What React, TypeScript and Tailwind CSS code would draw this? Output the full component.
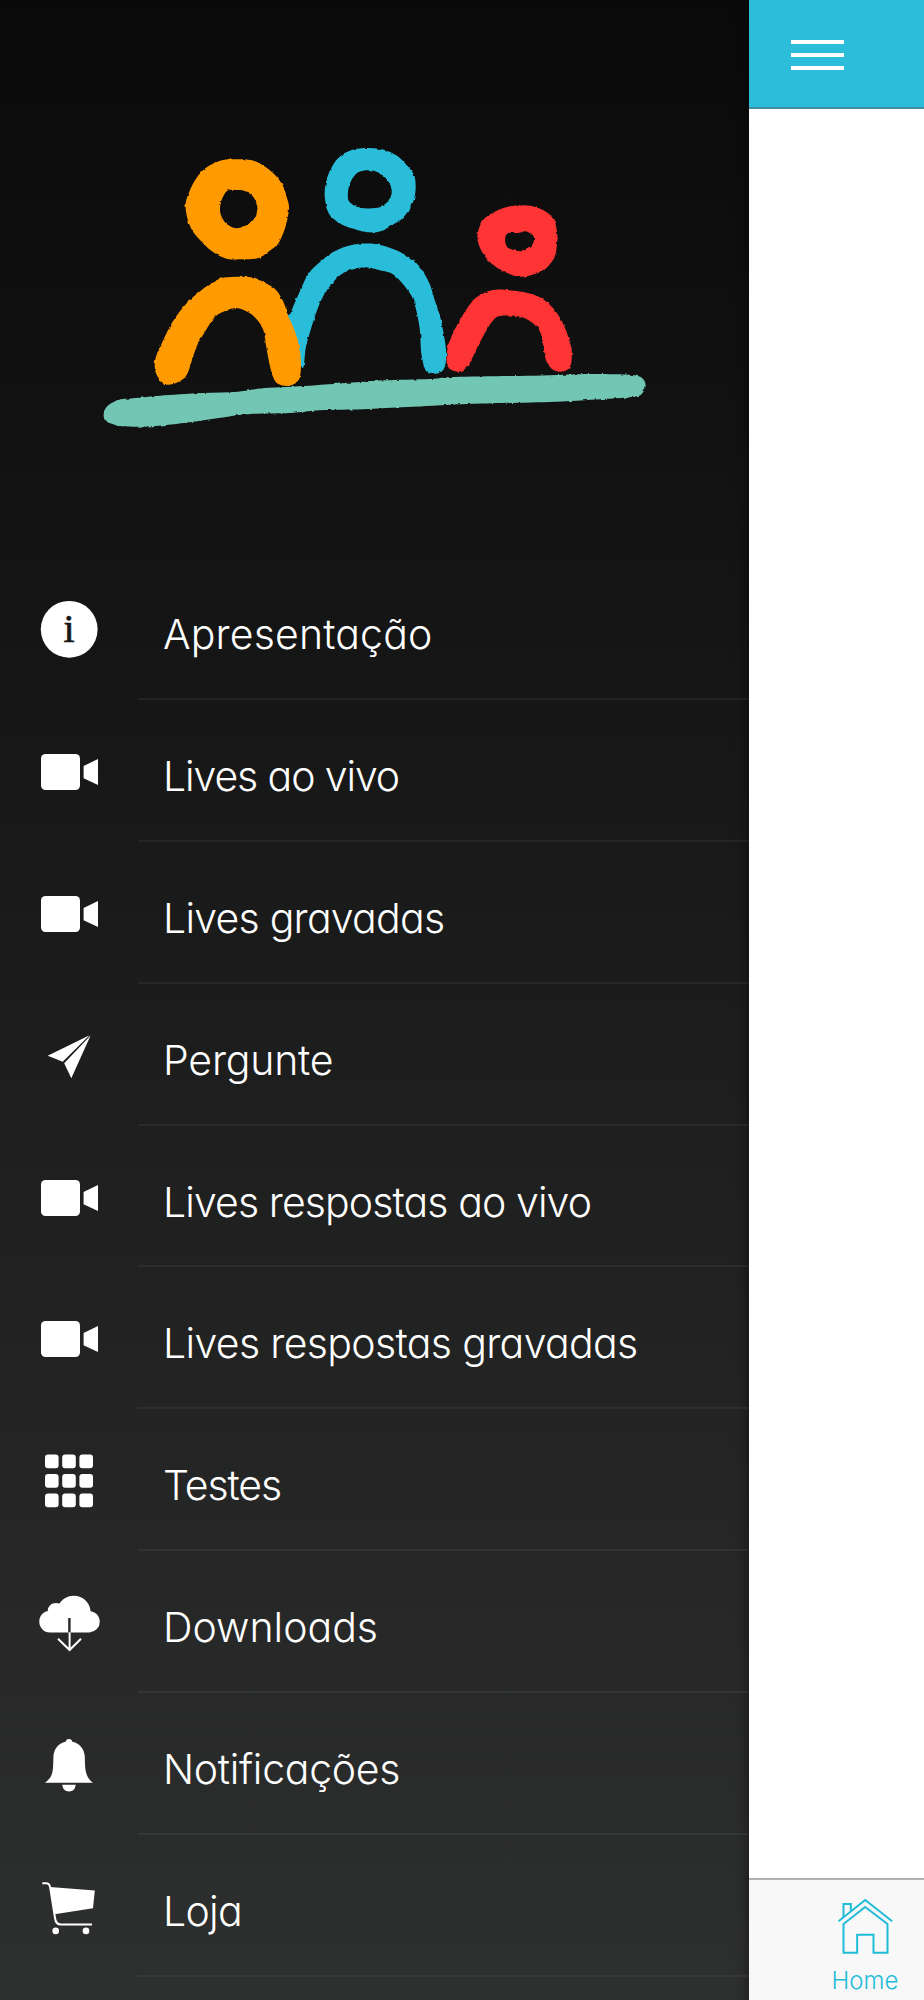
import React from "react";

// closed smooth curve through a list of "x y x y ..." points
function smooth(points: string) {
    const n = points.trim().split(/\s+/).map(Number);
    const count = n.length / 2;
    const at = (i: number) => {
        const k = ((i + count) % count) * 2;
        return [n[k], n[k + 1]];
    };
    let d = `M${n[0]} ${n[1]}`;
    for (let i = 0; i < count; i++) {
        const [a, b, c, e] = [at(i - 1), at(i), at(i + 1), at(i + 2)];
        d += ` C${b[0] + (c[0] - a[0]) / 6} ${b[1] + (c[1] - a[1]) / 6} ${c[0] - (e[0] - b[0]) / 6} ${c[1] - (e[1] - b[1]) / 6} ${c[0]} ${c[1]}`;
    }
    return d + "Z";
}

function Logo() {
    return (
        <svg viewBox="0 0 1680 930" className="h-[310px] w-[560px]">
            <filter id="rough" x="0" y="0" width="1680" height="930" filterUnits="userSpaceOnUse">
                <feTurbulence type="fractalNoise" baseFrequency="0.06" numOctaves="2" seed="4" />
                <feDisplacementMap in="SourceGraphic" scale="8" xChannelSelector="R" yChannelSelector="G" />
            </filter>
            <g filter="url(#rough)" fillRule="evenodd">
                {/* middle person */}
                <g fill="#2bbdd9">
                    <path
                        d={
                            smooth("785 60 835 54 882 59 908 70 932 86 956 112 972 136 977 170 972 208 958 238 936 266 908 284 872 304 835 307 800 299 765 288 735 270 714 245 704 195 709 153 722 118 745 84") +
                            smooth("838 121 860 125 884 141 901 165 905 190 896 213 882 227 855 234 820 235 797 229 776 212 774 185 782 155 800 130 820 122")
                        }
                    />
                    <path d={smooth("598 575 604 545 627 490 655 432 690 396 735 363 790 344 855 342 915 359 962 385 992 415 1018 460 1034 510 1049 555 1059 600 1068 660 1066 704 1052 727 1022 731 1005 717 994 670 989 595 976 530 958 487 912 435 870 421 835 413 795 416 752 434 715 475 690 518 668 580 648 650 636 712")} />
                </g>
                {/* left person */}
                <g fill="#ff9a02">
                    <path
                        d={
                            smooth("398 90 440 88 486 91 522 108 556 136 580 170 592 208 597 235 588 285 568 335 545 358 505 384 458 388 410 386 366 364 330 330 306 300 291 260 287 220 298 185 318 146 350 112") +
                            smooth("412 182 438 180 462 182 484 194 498 215 502 240 492 267 470 285 438 295 410 282 394 258 390 235 396 207")
                        }
                    />
                    <path d={smooth("410 442 450 440 492 443 528 460 558 480 580 515 594 556 614 602 627 648 633 700 627 748 600 767 565 762 548 738 536 690 528 645 520 600 500 568 475 547 440 534 408 542 375 560 348 600 322 645 306 690 290 735 263 757 230 764 207 746 195 718 198 680 220 630 248 575 290 520 335 480 375 453")} />
                </g>
                {/* right person */}
                <g fill="#ff3535">
                    <path
                        d={
                            smooth("1260 229 1295 226 1328 229 1368 245 1392 270 1401 305 1402 330 1396 374 1380 402 1352 426 1295 440 1250 428 1210 405 1182 375 1167 345 1162 318 1170 287 1185 264 1225 240") +
                            smooth("1255 309 1285 309 1306 304 1328 315 1332 330 1325 347 1310 358 1294 364 1260 357 1248 344 1246 322")
                        }
                    />
                    <path d={smooth("1205 481 1250 480 1310 488 1350 502 1385 530 1408 560 1430 605 1436 630 1445 658 1443 704 1430 720 1410 725 1385 716 1368 690 1358 635 1350 605 1327 578 1290 560 1230 558 1208 573 1190 600 1168 640 1150 678 1132 710 1105 725 1075 712 1070 672 1084 620 1113 565 1140 523 1162 500")} />
                </g>
                {/* ground */}
                <path
                    fill="#72c6b4"
                    d={smooth("78 812 98 807 150 803 210 797 335 789 445 785 525 774 660 767 800 757 880 751 1020 747 1095 741 1330 737 1500 732 1580 733 1640 737 1660 748 1667 768 1658 788 1636 800 1555 806 1395 815 1205 820 1085 824 935 832 820 838 690 841 600 849 480 852 380 865 300 877 185 889 98 889 65 881 47 874 41 855 50 830")}
                />
            </g>
        </svg>
    );
}

function Icon({ children }: { children: React.ReactNode }) {
    return (
        <svg viewBox="0 0 60 60" className="h-[60px] w-[60px] shrink-0 overflow-visible fill-white">
            {children}
        </svg>
    );
}

const info = (
    <Icon>
        <circle cx="30.2" cy="29.3" r="28.4" />
        <text
            x="30"
            y="42"
            textAnchor="middle"
            fontSize="40"
            className="fill-[#171717] stroke-[#171717] stroke-[0.7] font-['Liberation_Serif',serif]"
        >
            i
        </text>
    </Icon>
);

const camera = (
    <Icon>
        <rect x="2" y="12" width="39" height="36" rx="4.5" />
        <path d="M44.6 24 L59 17 V43 L44.6 36.3 Z" />
    </Icon>
);

const plane = (
    <Icon>
        <path d="M50.5 9.3 L8.7 29.8 L23.7 35.8 Z" />
        <path d="M51.6 9.6 L25.2 37.2 L32.3 52.3 Z" />
    </Icon>
);

const grid = (
    <Icon>
        {[3.6, 23.1, 42.6].map((y) =>
            [6, 23.2, 40.4].map((x) => <rect key={`${x}-${y}`} x={x} y={y} width="13.6" height="13.6" rx="3" />)
        )}
    </Icon>
);

const cloud = (
    <Icon>
        <path d="M10.8 39.4 A10.6 10.6 0 0 1 .3 28.6 C.3 23 4 19 8.8 18 C8.8 12.5 14 8.6 20.4 10.6 C23.5 5.8 28.5 2.7 34.8 2.7 C44 2.7 50.8 9.4 51.6 18.2 C57 19 60.8 23.3 60.8 28.6 A10.6 10.6 0 0 1 50.5 39.4 Z" />
        <path d="M30.4 25 V39.4" className="fill-none stroke-[#262827] stroke-[2.4]" />
        <path d="M30.6 39.4 V57.4 M19 45.7 L30.6 57 L42 45.7" className="fill-none stroke-white stroke-[2]" />
    </Icon>
);

const bell = (
    <Icon>
        <path d="M30 4 C32 4 33 5.2 33.4 6.8 C41 8.6 45.6 14.5 45.8 22 C46 30 46 33.5 47.2 38 C48.5 42.5 50.5 45 54 47.8 H6 C9.5 45 12 42.5 13.2 38 C14.3 33.5 14.2 30 14.4 22 C14.6 14.5 19 8.6 26.6 6.8 C27 5.2 28 4 30 4 Z" />
        <path d="M23.3 49.8 H36.7 C36.3 54 34 56.5 30 56.5 C26 56.5 23.7 54 23.3 49.8 Z" />
    </Icon>
);

const cart = (
    <Icon>
        <path d="M11 9.9 L55.8 13.6 L54 31.2 L15.6 37.2 Z" />
        <path
            d="M3.3 6.2 H7 C9.5 6.2 10.8 8 11.2 10.5 L16 41 C16.6 45.5 18.5 47.6 22 47.6 H53"
            className="fill-none stroke-white stroke-2"
        />
        <circle cx="16.7" cy="53.9" r="3.3" />
        <circle cx="47" cy="53.9" r="3.3" />
    </Icon>
);

const items = [
    { label: "Apresentação", icon: info, tracking: "tracking-[0.15px]" },
    { label: "Lives ao vivo", icon: camera, tracking: "tracking-[-1.1px]" },
    { label: "Lives gravadas", icon: camera, tracking: "tracking-[-0.75px]" },
    { label: "Pergunte", icon: plane, tracking: "tracking-[-0.2px]" },
    { label: "Lives respostas ao vivo", icon: camera, tracking: "tracking-[-0.9px]" },
    { label: "Lives respostas gravadas", icon: camera, tracking: "tracking-[-0.65px]" },
    { label: "Testes", icon: grid, tracking: "tracking-[-1.1px]" },
    { label: "Downloads", icon: cloud, tracking: "tracking-normal" },
    { label: "Notificações", icon: bell, tracking: "tracking-[-0.3px]" },
    { label: "Loja", icon: cart, tracking: "tracking-[-0.7px]" },
];

function Drawer() {
    return (
        <aside className="flex w-[749px] shrink-0 flex-col bg-linear-to-b from-[#0a0a0a] to-[#2e302f] shadow-[inset_-12px_0_12px_-10px_rgba(0,0,0,0.4)]">
            <div className="h-[558px] pt-[130px] pl-[90px]">
                <Logo />
            </div>
            <nav>
                {items.map(({ label, icon, tracking }) => (
                    <a key={label} href="#" className="flex h-[141.9px] pl-[39px]">
                        <span className="mt-[42px]">{icon}</span>
                        <span className="ml-[39px] flex-1 border-b-2 border-white/5 pt-[51px] pl-[25px]">
                            <span
                                className={`block text-[41px] leading-[50px] font-light whitespace-nowrap text-white [font-feature-settings:'cv11'] ${tracking}`}
                            >
                                {label}
                            </span>
                        </span>
                    </a>
                ))}
            </nav>
        </aside>
    );
}

export default function App() {
    return (
        <div className="flex h-[2000px] w-[924px] overflow-hidden bg-white font-[Inter,sans-serif]">
            <Drawer />
            <main className="flex flex-1 flex-col">
                <header className="h-[109px] border-b-2 border-[#3f8fa0] bg-[#2bbdd9] pt-10 pl-[42px]">
                    <button type="button" aria-label="Menu" className="flex w-[53px] flex-col gap-[9px]">
                        <span className="h-1 w-full bg-white" />
                        <span className="h-1 w-full bg-white" />
                        <span className="h-1 w-full bg-white" />
                    </button>
                </header>
                <div className="flex-1" />
                <footer className="h-[122px] border-t-2 border-[#b0b0b0] bg-[#f8f8f8] pt-[19px] pl-[76px]">
                    <a href="#" className="flex w-20 flex-col items-center text-[#1fbcd8]">
                        <svg viewBox="340 117 164 168" className="h-14 w-[55px] fill-none stroke-current stroke-[6]">
                            <path d="M341 184 L421 120 L502 184" />
                            <path d="M356 172 V132 H378 V154" />
                            <path d="M356 192 L421 141 L488 192 V278 H446 V224 H397 V278 H356 Z" />
                        </svg>
                        <span className="mt-[12px] text-[24px] leading-7 font-light">Home</span>
                    </a>
                </footer>
            </main>
        </div>
    );
}
